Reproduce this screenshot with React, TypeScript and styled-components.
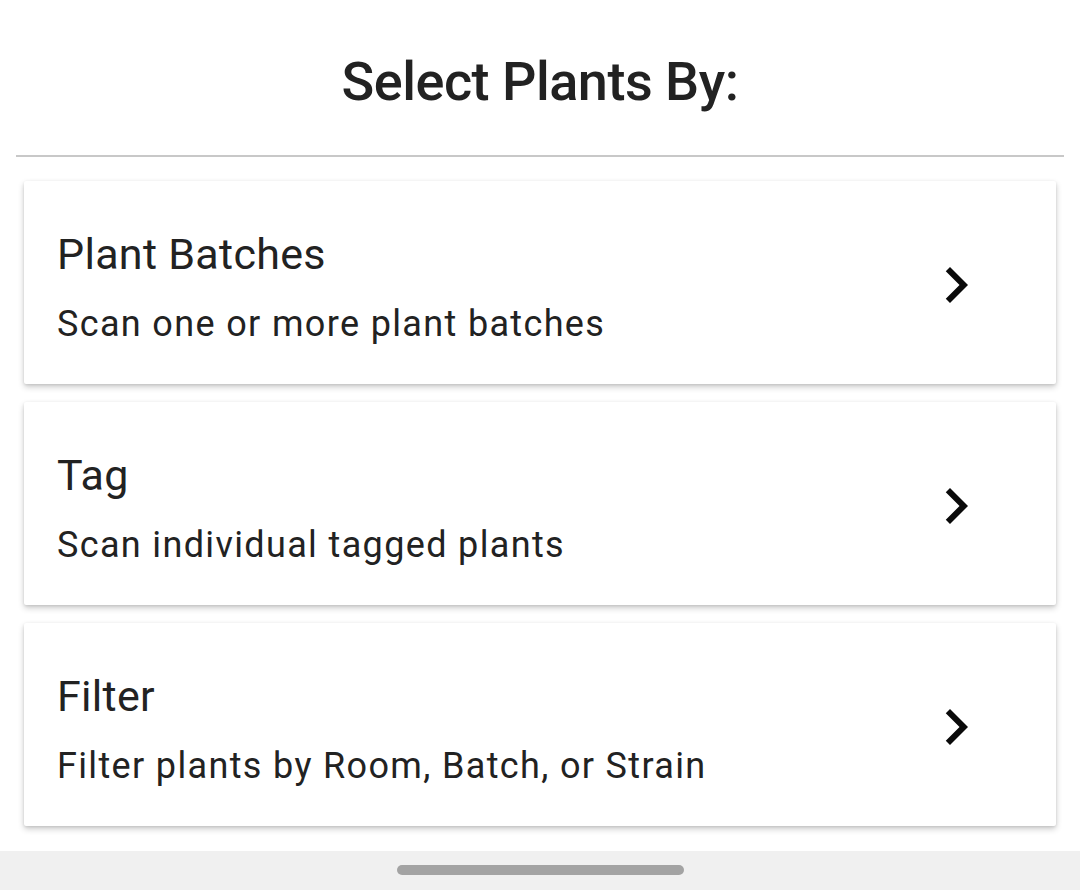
import React from "react";
import styled, { createGlobalStyle } from "styled-components";

const GlobalStyle = createGlobalStyle`
  html, body { margin: 0; padding: 0; background: #ffffff; }
  body { font-family: Roboto, "Noto Sans", sans-serif; color: #212121; }
  * { box-sizing: border-box; }
`;

const Screen = styled.div`
  width: 1080px;
  height: 890px;
  display: flex;
  flex-direction: column;
  background: #ffffff;
`;

const Header = styled.header`
  padding: 50px 0 41px;
  display: flex;
  justify-content: center;
`;

const Title = styled.h1`
  margin: 0;
  font-size: 54px;
  line-height: 64px;
  font-weight: 500;
  letter-spacing: -0.5px;
  color: #222222;
`;

const Divider = styled.hr`
  margin: 0 16px;
  border: none;
  height: 2px;
  background: #c8c8c8;
`;

const CardList = styled.main`
  flex: 1;
  display: flex;
  flex-direction: column;
  gap: 18px;
  padding: 24px 24px 25px;
`;

const Card = styled.button`
  display: flex;
  align-items: center;
  justify-content: space-between;
  width: 100%;
  height: 203px;
  flex-shrink: 0;
  padding: 0 64px 0 33px;
  border: none;
  border-radius: 2px;
  background: #ffffff;
  text-align: left;
  font-family: inherit;
  cursor: pointer;
  box-shadow: 0 3px 6px rgba(0, 0, 0, 0.2), 0 1px 3px rgba(0, 0, 0, 0.1);
`;

const TextCol = styled.div`
  display: flex;
  flex-direction: column;
  gap: 22px;
  padding-top: 8px;
`;

const CardTitle = styled.div`
  font-size: 43px;
  line-height: 52px;
  font-weight: 400;
  color: #222222;
  letter-spacing: 0.3px;
`;

const CardSubtitle = styled.div`
  font-size: 36px;
  line-height: 44px;
  font-weight: 400;
  color: #222222;
  letter-spacing: 1.35px;
`;

const Chevron = styled.svg`
  width: 72px;
  height: 72px;
  flex-shrink: 0;
  margin-top: 4px;
  fill: #0a0a0a;
`;

const NavBar = styled.footer`
  height: 39px;
  flex-shrink: 0;
  background: #f0f0f0;
  display: flex;
  justify-content: center;
  padding-top: 14px;
`;

const Handle = styled.div`
  width: 287px;
  height: 10px;
  border-radius: 5px;
  background: #a3a3a3;
`;

const options = [
  { title: "Plant Batches", subtitle: "Scan one or more plant batches" },
  { title: "Tag", subtitle: "Scan individual tagged plants" },
  { title: "Filter", subtitle: "Filter plants by Room, Batch, or Strain" },
];

export default function App() {
  return (
    <>
      <GlobalStyle />
      <Screen>
        <Header>
          <Title>Select Plants By:</Title>
        </Header>
        <Divider />
        <CardList>
          {options.map((o) => (
            <Card key={o.title}>
              <TextCol>
                <CardTitle>{o.title}</CardTitle>
                <CardSubtitle>{o.subtitle}</CardSubtitle>
              </TextCol>
              <Chevron viewBox="0 0 24 24">
                <path d="M10 6L8.59 7.41 13.17 12l-4.58 4.59L10 18l6-6z" />
              </Chevron>
            </Card>
          ))}
        </CardList>
        <NavBar>
          <Handle />
        </NavBar>
      </Screen>
    </>
  );
}
